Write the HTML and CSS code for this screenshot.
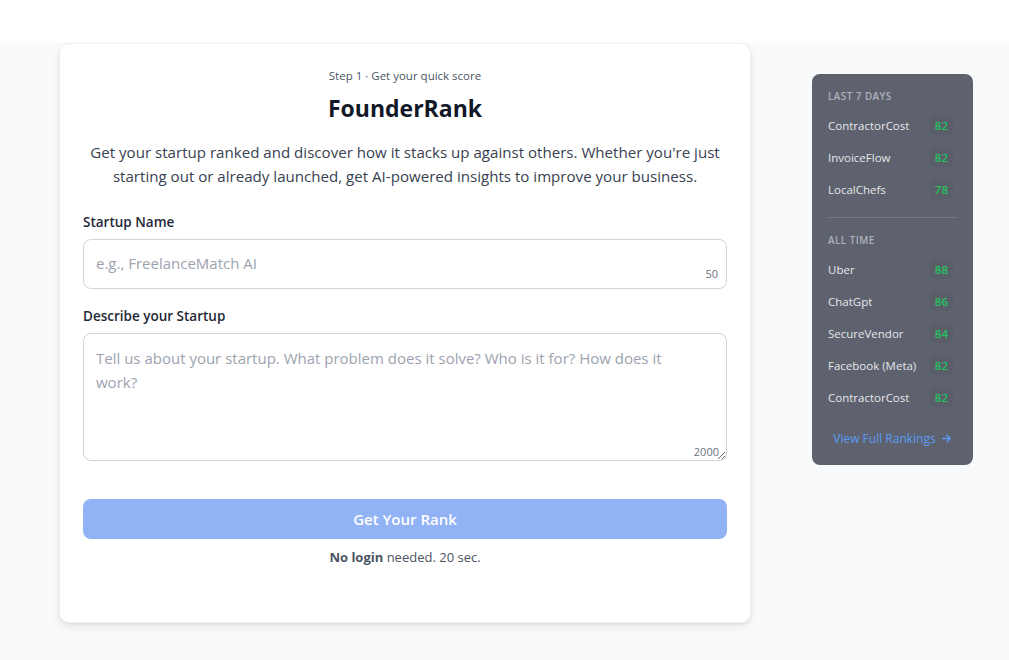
FILE: index.html
```html
<!DOCTYPE html>
<html lang="en">
<head>
<meta charset="utf-8">
<title>FounderRank</title>
<link rel="stylesheet" href="styles.css">
</head>
<body>
<div class="topbar"></div>
<main class="page">
  <section class="card">
    <p class="step">Step 1 · Get your quick score</p>
    <h1 class="title">FounderRank</h1>
    <p class="intro">Get your startup ranked and discover how it stacks up against others. Whether you're just starting out or already launched, get AI-powered insights to improve your business.</p>
    <form class="form">
      <label class="label" for="name">Startup Name</label>
      <div class="field">
        <input id="name" class="input" type="text" placeholder="e.g., FreelanceMatch AI">
        <span class="count count-input">50</span>
      </div>
      <label class="label" for="desc">Describe your Startup</label>
      <div class="field">
        <textarea id="desc" class="textarea" placeholder="Tell us about your startup. What problem does it solve? Who is it for? How does it work?"></textarea>
        <span class="count count-area">2000</span>
      </div>
      <button type="button" class="btn">Get Your Rank</button>
      <p class="note"><strong>No login</strong> needed. 20 sec.</p>
    </form>
  </section>
  <aside class="side">
    <h2 class="side-h">Last 7 days</h2>
    <ul class="list">
      <li class="row"><span>ContractorCost</span><span class="score">82</span></li>
      <li class="row"><span>InvoiceFlow</span><span class="score">82</span></li>
      <li class="row"><span>LocalChefs</span><span class="score">78</span></li>
    </ul>
    <div class="divider"></div>
    <h2 class="side-h">All time</h2>
    <ul class="list">
      <li class="row"><span>Uber</span><span class="score">88</span></li>
      <li class="row"><span>ChatGpt</span><span class="score">86</span></li>
      <li class="row"><span>SecureVendor</span><span class="score">84</span></li>
      <li class="row"><span>Facebook (Meta)</span><span class="score">82</span></li>
      <li class="row"><span>ContractorCost</span><span class="score">82</span></li>
    </ul>
    <a class="more" href="#">View Full Rankings <svg width="11" height="11" viewBox="0 0 12 12" fill="none" stroke="currentColor" stroke-width="1.6" stroke-linecap="round" stroke-linejoin="round"><path d="M2 6h8M6.5 2.5 10 6l-3.5 3.5"/></svg></a>
  </aside>
</main>
</body>
</html>
```
FILE: styles.css
```css
* { box-sizing: border-box; }
html, body { margin: 0; padding: 0; }
body {
  background: #f9fafb;
  font-family: "Open Sans", "Noto Sans", sans-serif;
  color: #374151;
  height: 660px;
  overflow: hidden;
}
.topbar { height: 43px; background: #ffffff; }
.page {
  display: flex;
  align-items: flex-start;
  padding-left: 59px;
  gap: 61px;
}
.card {
  width: 692px;
  height: 580px;
  background: #fff;
  border-radius: 10px;
  border: 1px solid #f0f1f3;
  box-shadow: 0 4px 8px rgba(0,0,0,0.08), 0 1px 3px rgba(0,0,0,0.06);
  padding: 24px 23px;
}
.step { margin: 0; text-align: center; font-size: 11.5px; color: #4b5563; line-height: 16px; }
.title { margin: 8px 0 0; text-align: center; font-size: 23px; font-weight: 700; color: #111827; line-height: 32px; }
.intro { margin: 16px 0 0; text-align: center; font-size: 15.1px; line-height: 24px; color: #374151; }
.form { display: flex; flex-direction: column; margin-top: 24px; }
.label { font-size: 13.5px; font-weight: 600; color: #1f2937; line-height: 20px; margin-bottom: 7px; }
.field { position: relative; margin-bottom: 16px; }
.field:first-of-type { margin-bottom: 17px; }
.input, .textarea {
  display: block; width: 100%;
  border: 1px solid #d1d5db; border-radius: 8px;
  font-family: inherit; font-size: 15px; color: #111827;
  padding: 12px 12px; background: #fff; outline: none;
}
.input { height: 50px; padding-bottom: 14px; }
.textarea { height: 128px; line-height: 24px; resize: vertical; padding-top: 12px; padding-right: 44px; }
.input::placeholder, .textarea::placeholder { color: #9ca3af; }
.count { position: absolute; right: 9px; font-size: 11px; color: #6b7280; line-height: 14px; }
.count-input { bottom: 8px; }
.count-area { bottom: 2px; right: 8px; }
.btn {
  margin-top: 22px;
  height: 40px; border: none; border-radius: 8px;
  background: #91b2f4; color: #fff;
  font-family: inherit; font-size: 15px; font-weight: 600;
}
.note { margin: 8px 0 0; text-align: center; font-size: 13px; color: #4b5563; line-height: 20px; }
.note strong { font-weight: 700; }
.side {
  margin-top: 31px;
  width: 161px;
  background: #5e626e;
  border-radius: 8px;
  padding: 16px 16px 18px;
  color: #e5e7eb;
}
.side-h { margin: 0; font-size: 9.8px; font-weight: 600; letter-spacing: 0.5px; text-transform: uppercase; color: #aeb3bb; line-height: 14px; }
.list { list-style: none; margin: 5px 0 0; padding: 0; }
.row { display: flex; justify-content: space-between; align-items: center; height: 32px; font-size: 11.5px; padding-right: 4px; }
.score { color: #22c55e; font-weight: 600; background: rgba(0,0,0,0.04); padding: 2px 5px; border-radius: 3px; font-size: 11.5px; }
.divider { height: 1px; background: #737884; margin: 12px 0 16px; }
.more { display: flex; align-items: center; justify-content: center; gap: 5px; color: #5b9bf3; font-size: 12px; text-decoration: none; margin-top: 17px; }
```
